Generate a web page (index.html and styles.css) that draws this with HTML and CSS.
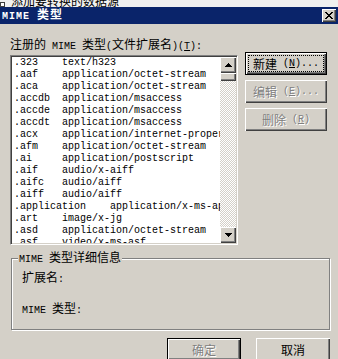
FILE: index.html
```html
<!DOCTYPE html>
<html lang="zh-CN">
<head>
<meta charset="utf-8">
<title>MIME 类型</title>
<link rel="stylesheet" href="styles.css">
</head>
<body>
<div class="behind"><div class="behind-text"><span class="chk"></span><span class="behind-label">添加要转换的数据源</span></div></div>
<div class="titlebar">
  <span class="title"><span class="a">MIME </span>类型</span>
  <span class="close"><svg width="8" height="7" viewBox="0 0 8 7" shape-rendering="crispEdges"><path d="M0 0h2v1H0zM6 0h2v1H6zM1 1h2v1H1zM5 1h2v1H5zM2 2h4v1H2zM3 3h2v1H3zM2 4h4v1H2zM1 5h2v1H1zM5 5h2v1H5zM0 6h2v1H0zM6 6h2v1H6z" fill="#000"/></svg></span>
</div>
<div class="body">
  <div class="label">注册的<span class="a"> MIME </span>类型<span class="a">(</span>文件扩展名<span class="a">)(<u>T</u>):</span></div>
  <div class="row">
    <div class="listbox">
      <div class="items">
        <div class="item">.323	text/h323</div>
        <div class="item">.aaf	application/octet-stream</div>
        <div class="item">.aca	application/octet-stream</div>
        <div class="item">.accdb	application/msaccess</div>
        <div class="item">.accde	application/msaccess</div>
        <div class="item">.accdt	application/msaccess</div>
        <div class="item">.acx	application/internet-property-stream</div>
        <div class="item">.afm	application/octet-stream</div>
        <div class="item">.ai	application/postscript</div>
        <div class="item">.aif	audio/x-aiff</div>
        <div class="item">.aifc	audio/aiff</div>
        <div class="item">.aiff	audio/aiff</div>
        <div class="item">.application	application/x-ms-application</div>
        <div class="item">.art	image/x-jg</div>
        <div class="item">.asd	application/octet-stream</div>
        <div class="item">.asf	video/x-ms-asf</div>
      </div>
      <div class="scrollbar">
        <div class="sb-btn"><svg width="7" height="4" viewBox="0 0 7 4" shape-rendering="crispEdges"><path d="M3 0h1v1H3zM2 1h3v1H2zM1 2h5v1H1zM0 3h7v1H0z" fill="#000"/></svg></div>
        <div class="sb-thumb"></div>
        <div class="sb-track"></div>
        <div class="sb-btn"><svg width="7" height="4" viewBox="0 0 7 4" shape-rendering="crispEdges"><path d="M0 0h7v1H0zM1 1h5v1H1zM2 2h3v1H2zM3 3h1v1H3z" fill="#000"/></svg></div>
      </div>
    </div>
    <div class="side">
      <div class="btn default"><span class="focus">新建<span class="a"> (<u>N</u>)...</span></span></div>
      <div class="btn disabled">编辑<span class="a"> (<u>E</u>)...</span></div>
      <div class="btn disabled">删除<span class="a"> (<u>R</u>)</span></div>
    </div>
  </div>
  <fieldset class="group">
    <legend><span class="a">MIME </span>类型详细信息</legend>
    <div class="field">扩展名<span class="a">:</span></div>
    <div class="field second"><span class="a">MIME </span>类型<span class="a">:</span></div>
  </fieldset>
  <div class="actions">
    <div class="btn default disabled wide">确定</div>
    <div class="btn wide">取消</div>
  </div>
</div>
</body>
</html>
```

FILE: styles.css
```css
html, body {
  margin: 0;
  height: 359px;
  overflow: hidden;
}
body {
  width: 338px;
  background: #d4d0c8;
  font: 12px/14px "Noto Sans CJK SC", sans-serif;
  color: #000;
}
.a {
  font-family: "Liberation Mono", monospace;
  font-size: 10px;
  white-space: pre;
}
.behind {
  height: 7px;
  overflow: hidden;
  background: #f0f0f0;
  display: flex;
  align-items: flex-end;
}
.behind-text {
  display: flex;
  align-items: flex-start;
  line-height: 12px;
  height: 12px;
  color: #000;
}
.chk {
  width: 3px;
  height: 3px;
  border: 1px solid #404040;
  background: #fff;
  margin-top: 7px;
  margin-right: 6px;
}
.titlebar {
  height: 17px;
  background: #0a246a;
  display: flex;
  align-items: center;
  justify-content: space-between;
  padding: 0 2px;
}
.title {
  color: #fff;
  font-weight: bold;
  letter-spacing: 1px;
  line-height: 14px;
}
.title .a {
  font-weight: bold;
}
.close {
  width: 14px;
  height: 13px;
  background: #d4d0c8;
  box-shadow: inset 1px 1px #fff, inset -1px -1px #404040, inset -2px -2px #808080;
  display: flex;
  align-items: center;
  justify-content: center;
}
.close svg { display: block; }
.body {
  padding: 13px 0 0 10px;
}
.label {
  height: 14px;
  line-height: 14px;
}
.row {
  display: flex;
  align-items: flex-start;
  margin-top: 1px;
}
.listbox {
  margin-top: 3px;
  width: 228px;
  height: 190px;
  box-sizing: border-box;
  border: 1px solid;
  border-color: #808080 #fff #fff #808080;
  padding: 1px;
  background: #fff;
  box-shadow: inset 1px 1px #404040, inset -1px -1px #d4d0c8;
  display: flex;
}
.items {
  flex: 1;
  overflow: hidden;
  padding-left: 2px;
  font: 10px/12px "Liberation Mono", monospace;
}
.item {
  white-space: pre;
  tab-size: 8;
  height: 12px;
}
.scrollbar {
  width: 16px;
  display: flex;
  flex-direction: column;
}
.sb-btn, .sb-thumb {
  background: #d4d0c8;
  box-shadow: inset 1px 1px #fff, inset -1px -1px #404040, inset -2px -2px #808080;
}
.sb-btn {
  height: 16px;
  display: flex;
  align-items: center;
  justify-content: center;
}
.sb-btn svg { display: block; }
.sb-thumb {
  height: 8px;
}
.sb-track {
  flex: 1;
  background: repeating-conic-gradient(#fff 0 25%, #d4d0c8 0 50%) 0 0 / 2px 2px;
}
.side {
  margin-left: 7px;
  width: 82px;
  display: flex;
  flex-direction: column;
  gap: 5px;
}
.btn {
  height: 23px;
  box-sizing: border-box;
  display: flex;
  align-items: center;
  justify-content: center;
  background: #d4d0c8;
  box-shadow: inset 1px 1px #fff, inset -1px -1px #404040, inset -2px -2px #808080;
}
.btn.default {
  border: 1px solid #000;
}
.focus {
  flex: 1;
  align-self: stretch;
  margin: 2px;
  border: 1px dotted #000;
  display: flex;
  align-items: center;
  justify-content: center;
}
.disabled {
  color: #808080;
  text-shadow: 1px 1px #fff;
}
.group {
  margin: 5px 0 0 1px;
  width: 319px;
  height: 80px;
  box-sizing: border-box;
  border: 1px solid #808080;
  padding: 3px 0 0 10px;
  min-width: 0;
  box-shadow: 1px 1px 0 #fff, inset 1px 1px 0 #fff;
}
.group legend {
  padding: 0 1px;
  margin-left: -4px;
  line-height: 14px;
  background: #d4d0c8;
}
.field {
  line-height: 14px;
}
.field.second {
  margin-top: 14px;
}
.actions {
  display: flex;
  justify-content: flex-end;
  gap: 15px;
  margin-top: 8px;
  margin-right: 8px;
}
.btn.wide {
  width: 74px;
}
```
